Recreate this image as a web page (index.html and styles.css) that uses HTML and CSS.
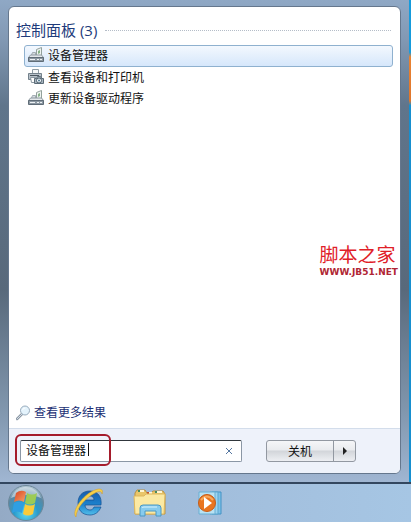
FILE: index.html
```
<!DOCTYPE html>
<html lang="zh-CN">
<head>
    <meta charset="utf-8">
    <meta name="viewport" content="width=device-width, initial-scale=1.0">
    <title>设备管理器</title>
    <link rel="stylesheet" href="styles.css">
</head>
<body>
    <!-- shared icons -->
    <svg class="defs" width="0" height="0" aria-hidden="true">
        <symbol id="icon-device" viewBox="0 0 16 16">
            <path d="M8.500 9V2.500l5-2V9" fill="#eef3f1" stroke="#93a19c"/>
            <path d="M10 4l2-1v3l-2 1z" fill="#86b287"/>
            <path d="M3.500 8l1-2.500h3V8" fill="#d5dbe0" stroke="#a3adb4"/>
            <path d="M.5 10.500l2-2.500h11l2 2.500z" fill="#e3e7ea" stroke="#8e99a1"/>
            <path d="M.5 10.500h15v4H.5z" fill="#8d99a3" stroke="#5f6c77"/>
            <path d="M2 12h5v1H2zM9 12h2v1H9zM12 12h2v1h-2z" fill="#eef2f5"/>
        </symbol>
        <symbol id="icon-printer" viewBox="0 0 16 16">
            <path d="M4.500 5V.5h6V5" fill="#f6f9fa" stroke="#8f9ca5"/>
            <path d="M.5 4.500h13v6H.5z" fill="#b7c1c9" stroke="#73818b"/>
            <path d="M2 6.500h9" stroke="#4a5660"/>
            <path d="M2.500 8.500h5v5h-4z" fill="#fff" stroke="#8a97a0"/>
            <path d="M6.500 9.500h2l1-2h3l1 2h2v5h-9z" fill="#a7b4bd" stroke="#5c6c78"/>
            <circle cx="11" cy="11.500" r="2.500" fill="#f0f6fa" stroke="#4e606d"/>
            <circle cx="11" cy="11.500" r="1" fill="#4b7591"/>
        </symbol>
    </svg>

    <main class="start-menu">
        <div class="panel">
            <section class="results">
                <div class="group-title">
                    <h1>控制面板 (3)</h1>
                    <hr>
                </div>
                <ul class="result-list">
                    <li><a class="result selected" href="#"><svg width="16" height="16"><use href="#icon-device"/></svg>设备管理器</a></li>
                    <li><a class="result" href="#"><svg width="16" height="16"><use href="#icon-printer"/></svg>查看设备和打印机</a></li>
                    <li><a class="result" href="#"><svg width="16" height="16"><use href="#icon-device"/></svg>更新设备驱动程序</a></li>
                </ul>
                <a class="more" href="#">
                    <svg width="16" height="16" viewBox="0 0 16 16">
                        <path d="M6 9l-5 5" stroke="#8b98a5" stroke-width="2.500" stroke-linecap="round"/>
                        <path d="M6 9l-5 5" stroke="#d6dde4" stroke-linecap="round"/>
                        <circle cx="9" cy="5.500" r="4.500" fill="#e4f3fc" stroke="#98abbc"/>
                        <path d="M6.500 5a3 3 0 0 1 3-2" fill="none" stroke="#fff"/>
                    </svg>
                    查看更多结果
                </a>
            </section>

            <form class="footer">
                <div class="search">
                    <input type="text" id="query" aria-label="搜索程序和文件" value="设备管理器">
                    <span class="caret"></span>
                    <button class="clear" type="reset" aria-label="清除">
                        <svg width="8" height="8" viewBox="0 0 8 8"><path d="M1 1l6 6M7 1L1 7" stroke="#5577a0"/></svg>
                    </button>
                    <div class="highlight"></div>
                </div>
                <div class="power">
                    <button class="shutdown" type="button">关机</button>
                    <button class="options" type="button" aria-label="更多选项">
                        <svg width="4" height="8" viewBox="0 0 4 8"><path d="M0 0l4 4-4 4z" fill="#222"/></svg>
                    </button>
                </div>
            </form>

            <div class="watermark">
                <strong>脚本之家</strong>
                <span>WWW.JB51.NET</span>
            </div>
        </div>
    </main>

    <nav class="taskbar">
        <button type="button" aria-label="开始">
            <svg width="38" height="38" viewBox="0 0 38 38">
                <defs>
                    <radialGradient id="orb" cx=".5" cy=".8" r=".85">
                        <stop offset="0" stop-color="#62dcf2"/>
                        <stop offset=".4" stop-color="#2a9bcb"/>
                        <stop offset=".7" stop-color="#5b88a3"/>
                        <stop offset="1" stop-color="#d3dfe6"/>
                    </radialGradient>
                    <linearGradient id="red" x1="0" y1="0" x2="1" y2="1">
                        <stop offset="0" stop-color="#d8431f"/>
                        <stop offset="1" stop-color="#f7a26a"/>
                    </linearGradient>
                </defs>
                <circle cx="19" cy="19" r="17.500" fill="url(#orb)" stroke="#6c8799"/>
                <path d="M4 14C8 5 14 3 19 3s12 3 15 11c-9-4-21-4-30 0z" fill="#f0f5f7" opacity=".5"/>
                <path d="M9 9q5-4 10-1l-2 10q-5-3-10 0z" fill="url(#red)"/>
                <path d="M20 9q5 3 10 0l-2 10q-5 3-10 0z" fill="#9ccb56"/>
                <path d="M7 19q5-3 10 0l-2 10q-5-3-10 0z" fill="#2f9fe2"/>
                <path d="M18 20q5 3 10 0l-2 10q-5 3-10 0z" fill="#fbcb3a"/>
            </svg>
        </button>
        <button type="button" aria-label="Internet Explorer">
            <svg width="32" height="32" viewBox="0 0 32 32">
                <defs>
                    <linearGradient id="ie" x1="0" y1="0" x2="0" y2="1">
                        <stop offset="0" stop-color="#1a5cab"/>
                        <stop offset=".55" stop-color="#1b81cd"/>
                        <stop offset="1" stop-color="#52bde9"/>
                    </linearGradient>
                </defs>
                <path d="M28 18H12c0 3 2 5 5 5 2 0 3-1 4-3h7c-2 5-6 8-11 8C9 28 5 23 5 16S9 4 17 4s12 6 11 14zM12 13h9c0-3-2-4-4-4-3 0-5 1-5 4z" fill="url(#ie)" stroke="#164f91" stroke-width=".7" fill-rule="evenodd"/>
                <path d="M3 30C-2 25 9 8 22 3c5-2 9-1 7 4 0-3-3-3-7-1C12 11 3 22 3 30z" fill="#f6d04a" stroke="#d59a21" stroke-width=".5"/>
            </svg>
        </button>
        <button type="button" aria-label="资源管理器">
            <svg width="34" height="32" viewBox="0 0 34 32">
                <path d="M2 6l2-3h8l2 3h4l2-2h10l2 3v20H2z" fill="#eac669" stroke="#b99144"/>
                <path d="M5 4h6M14 6h5M22 5h7" stroke="#fff5d2" stroke-width="2"/>
                <path d="M5 4h2M22 5h2" stroke="#468b60" stroke-width="2"/>
                <path d="M14 6h2" stroke="#c4542f" stroke-width="2"/>
                <path d="M1 9h10l2-2h19l-1 20H2z" fill="#fbe9a3" stroke="#ddb75e"/>
                <path d="M7 29v-8q0-3 3-3h15q3 0 3 3v8h-5v-5H12v5z" fill="#87cbed" stroke="#4a98c4"/>
                <path d="M9 21q0-1 2-1h13" fill="none" stroke="#d6f3ff"/>
            </svg>
        </button>
        <button type="button" aria-label="媒体播放器">
            <svg width="28" height="28" viewBox="0 0 28 28">
                <path d="M17 3h9v22h-9z" fill="#7fc2e8" stroke="#4292c4"/>
                <path d="M15 3h8v22h-8z" fill="#9ed4f0" stroke="#5aa6cf"/>
                <path d="M4 3h16v22H4z" fill="#b8e2f4" stroke="#68aed2"/>
                <circle cx="12" cy="14" r="8.500" fill="#e97520" stroke="#c75c17"/>
                <path d="M6 11q6-7 12 0" fill="none" stroke="#f7a85b" stroke-width="2"/>
                <path d="M9 8l8 6-8 6z" fill="#fff"/>
            </svg>
        </button>
    </nav>
</body>
</html>
```
FILE: styles.css
```
* {
    box-sizing: border-box;
}
body {
    display: flex;
    flex-direction: column;
    min-height: 100vh;
    margin: 0;
    font-family: "Open Sans", "Noto Sans CJK SC", sans-serif;
    font-size: 12px;
    color: #111;
    background: #a5c1df;
}
button,
input {
    font: inherit;
    color: inherit;
}
a {
    text-decoration: none;
}
.defs {
    position: absolute;
}

/* menu frame */
.start-menu {
    flex: 1;
    display: flex;
    padding: 6px 8px 8px;
    background: linear-gradient(#8fa8c5, #8299b4 8%, #60758b 22%, #58697b 60%, #8096ad 85%, #a0b6d2);
    border-right: 2px solid #1594d5;
    border-image: linear-gradient(#159bdc 11%, #e98332 12%, #df762c 21%, #168fcf 22%) 1;
    border-width: 0 2px 0 0;
}
.panel {
    position: relative;
    flex: 1;
    display: flex;
    flex-direction: column;
    border: 1px solid #65778d;
    border-radius: 6px;
    background: #fff;
    overflow: hidden;
}
.results {
    flex: 1;
    display: flex;
    flex-direction: column;
    padding: 12px 7px 5px;
}
.group-title {
    display: flex;
    align-items: center;
    gap: 8px;
    padding-right: 2px;
}
.group-title h1 {
    margin: 0;
    font-size: 15px;
    font-weight: normal;
    line-height: 22px;
    color: #1e3b7b;
}
.group-title hr {
    flex: 1;
    margin: 0;
    border: 0;
    border-top: 1px dotted #b5bdc8;
}
.result-list {
    margin: 4px 0 0 8px;
    padding: 0;
    list-style: none;
}
.result {
    display: flex;
    align-items: center;
    gap: 4px;
    height: 21px;
    padding: 0 3px 2px;
    border: 1px solid transparent;
    border-radius: 3px;
    color: #111;
}
.result.selected {
    height: 22px;
    border-color: #8fb1cf;
    background: linear-gradient(#f3f8fe, #d6e7fb);
}
.more {
    display: flex;
    align-items: center;
    gap: 2px;
    margin-top: auto;
    line-height: 20px;
    color: #1b2f74;
}

/* search and power buttons */
.footer {
    display: flex;
    align-items: center;
    gap: 24px;
    height: 45px;
    padding: 0 44px 0 11px;
    border-top: 1px solid #d3ddeb;
    background: #eef2fa;
}
.search {
    position: relative;
    flex: 1;
    display: flex;
    align-items: center;
    height: 22px;
    border: 1px solid #8b97a5;
    border-top-color: #30363c;
    border-radius: 2px;
    background: #fff;
}
.search input {
    flex: 1;
    min-width: 0;
    height: 20px;
    padding: 0 5px 3px;
    border: 0;
    background: none;
    outline: none;
}
.caret {
    position: absolute;
    left: 67px;
    top: 2px;
    width: 1px;
    height: 13px;
    background: #111;
}
.clear {
    display: flex;
    padding: 8px;
    border: 0;
    background: none;
}
.highlight {
    position: absolute;
    left: -6px;
    top: -7px;
    width: 96px;
    height: 32px;
    border: 2px solid #a51c2c;
    border-radius: 6px;
    pointer-events: none;
}
.power {
    display: flex;
    height: 22px;
    border: 1px solid #9298a1;
    border-radius: 3px;
    background: linear-gradient(#f5f6f8, #e9ebee 45%, #d2d5da 50%, #edeff3);
}
.power button {
    display: flex;
    align-items: center;
    justify-content: center;
    padding: 0;
    border: 0;
    background: none;
}
.power .shutdown {
    width: 67px;
    border-right: 1px solid #9298a1;
}
.power .options {
    width: 21px;
}

.watermark {
    position: absolute;
    right: 2px;
    top: 236px;
    display: flex;
    flex-direction: column;
    color: #e02028;
}
.watermark strong {
    font-size: 19px;
    font-weight: normal;
    line-height: 24px;
}
.watermark span {
    font-family: "DejaVu Sans", sans-serif;
    font-size: 9px;
    font-weight: bold;
    line-height: 10px;
    color: #b02534;
}

.taskbar {
    display: flex;
    align-items: center;
    gap: 28px;
    height: 40px;
    padding: 0 7px;
    border-top: 2px solid #33475f;
    background: linear-gradient(90deg, #94aac5, #a0bad8 30%, #a6c6e4);
}
.taskbar button {
    display: flex;
    padding: 0;
    border: 0;
    background: none;
}
```
